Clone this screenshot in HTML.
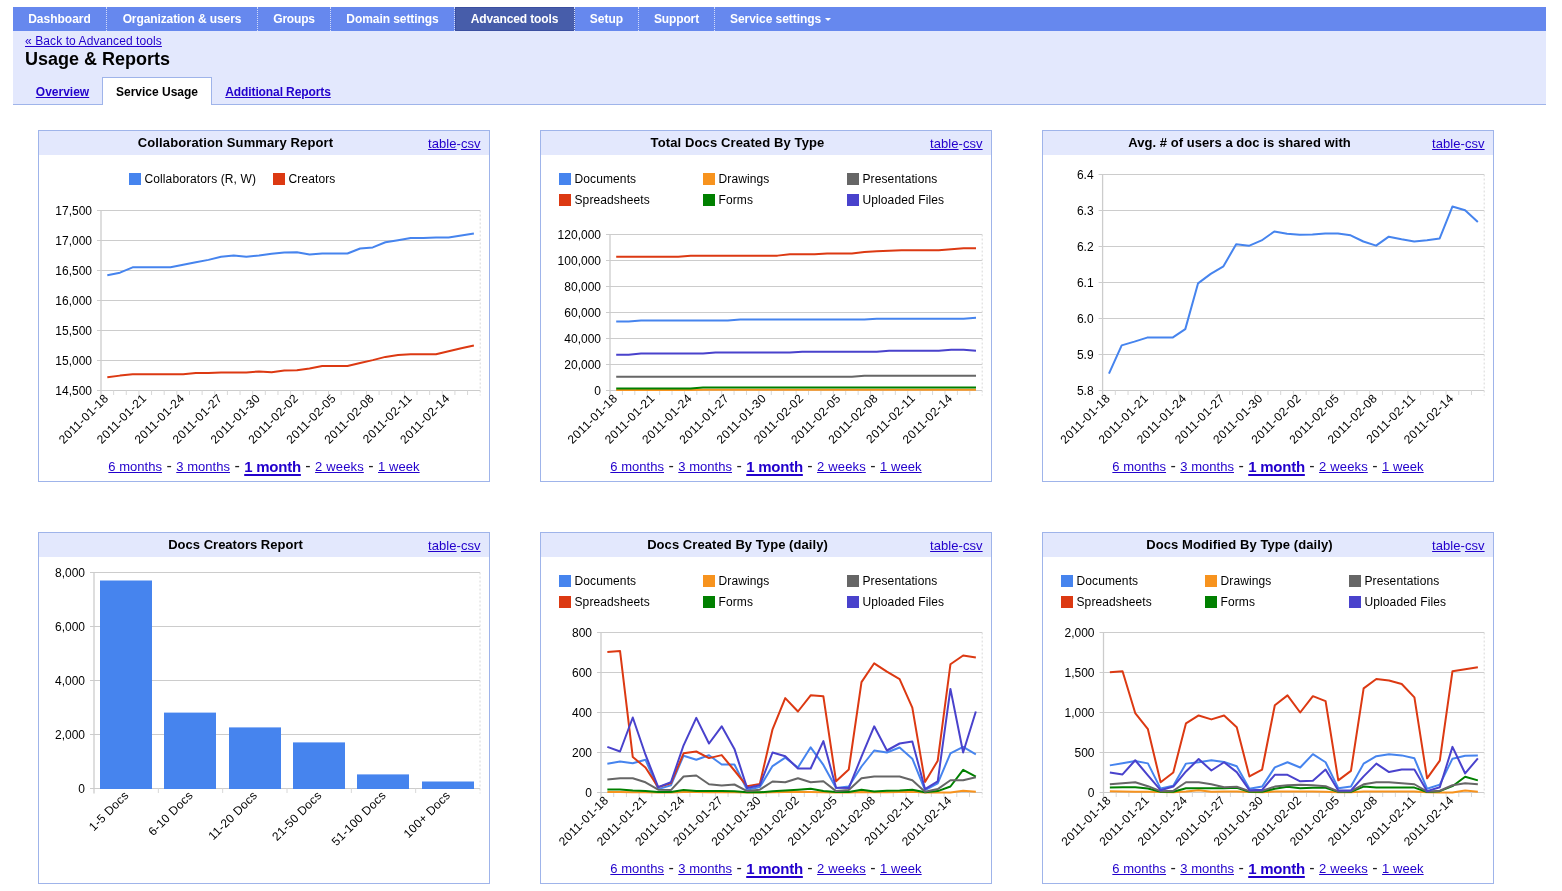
<!DOCTYPE html>
<html><head><meta charset="utf-8"><title>Usage &amp; Reports</title>
<style>
html,body{margin:0;padding:0;background:#fff;}
body{width:1562px;height:891px;overflow:hidden;position:relative;font-family:"Liberation Sans",sans-serif;font-size:13px;color:#000;}
a{color:#2200cc;text-decoration:underline;cursor:pointer;}
#nav{position:absolute;left:13px;top:7px;width:1533px;height:24px;background:#6688ee;white-space:nowrap;font-size:0;}
#nav span{display:inline-block;height:24px;line-height:25px;padding:0;text-align:center;border-right:1px dotted #d3dcf9;color:#fff;font-weight:bold;font-size:12px;vertical-align:top;box-sizing:content-box;}
#nav span.sel{background:#475daa;box-shadow:inset 1px 1px 0 #3b4fa0, inset 0 -1px 0 #3b4fa0;}
#nav span.last{border-right:none;}
#nav i{display:inline-block;width:0;height:0;border-left:3px solid transparent;border-right:3px solid transparent;border-top:3px solid #fff;margin-left:4px;vertical-align:middle;position:relative;top:0px;}
#sub{position:absolute;left:13px;top:31px;width:1533px;height:74px;background:#e3e8fd;border-bottom:1px solid #9fb4ea;box-sizing:border-box;}
#back{position:absolute;left:12px;top:3px;font-size:12px;line-height:14px;letter-spacing:0.09px;white-space:nowrap;}
#h1{position:absolute;left:12px;top:17px;font-size:18px;font-weight:bold;line-height:22px;color:#000;white-space:nowrap;}
#tabs{position:absolute;left:10px;top:46px;height:28px;white-space:nowrap;font-size:0;}
#tabs span{display:inline-block;height:26px;line-height:28px;padding:0;text-align:center;border:1px solid transparent;border-bottom:none;font-size:12px;font-weight:bold;vertical-align:top;}
#tabs span.on{background:#fff;border-color:#9fb4ea;height:27px;color:#000;}
.panel{position:absolute;width:450px;height:350px;border:1px solid #9fb4ea;background:#fff;}
.ph{position:absolute;left:0;top:0;width:450px;height:24px;background:#e3e8fd;}
.pt{position:absolute;left:0;top:0;width:393px;text-align:center;font-weight:bold;font-size:13px;line-height:23px;white-space:nowrap;}
.pl{position:absolute;right:8.4px;letter-spacing:0.05px;top:0;font-size:13px;line-height:25px;white-space:nowrap;color:#2200cc;}
.rng{position:absolute;left:0;width:450px;top:325px;text-align:center;font-size:16px;line-height:20px;white-space:nowrap;color:#222;}
.rng a{font-size:13px;}
.rng a{letter-spacing:0.03px;}
.rng a.cur{font-size:15px;font-weight:bold;letter-spacing:-0.24px;position:relative;top:1px;text-decoration-thickness:2px;text-underline-offset:2px;}
.rng a.w2{letter-spacing:0.15px;}
.rng a.w1{letter-spacing:0.07px;}
svg{position:absolute;left:0;top:0;}
#wrap{position:absolute;left:0;top:0;width:1562px;height:891px;will-change:transform;}
.xl{letter-spacing:0.4px;}
.xb{letter-spacing:0.28px;}
.lg{letter-spacing:0.11px;}
.t{font-family:"Liberation Sans",sans-serif;font-size:12px;fill:#000000;}
</style></head><body><div id="wrap">
<div id="nav"><span style="width:93px;letter-spacing:-0.0px">Dashboard</span><span style="width:150px;letter-spacing:-0.1px">Organization &amp; users</span><span style="width:72px;letter-spacing:-0.2px">Groups</span><span style="width:123px;letter-spacing:-0.07px">Domain settings</span><span class="sel" style="width:119px;letter-spacing:-0.13px">Advanced tools</span><span style="width:63px;letter-spacing:0px">Setup</span><span style="width:75px;letter-spacing:-0.14px">Support</span><span class="last" style="padding-left:15px;letter-spacing:-0.06px">Service settings<i></i></span></div>
<div id="sub"><a id="back">&laquo; Back to Advanced tools</a><div id="h1">Usage &amp; Reports</div>
<div id="tabs"><span style="width:77px"><a>Overview</a></span><span class="on" style="width:108px">Service Usage</span><span style="width:130px;letter-spacing:-0.1px"><a>Additional Reports</a></span></div></div>
<div class="panel" style="left:38px;top:130px"><div class="ph"><div class="pt" style="letter-spacing:0.116px">Collaboration Summary Report</div><div class="pl"><a>table</a>-<a>csv</a></div></div><div class="rng"><a>6 months</a> - <a>3 months</a> - <a class="cur">1 month</a> - <a class="w2">2 weeks</a> - <a class="w1">1 week</a></div></div>
<div class="panel" style="left:540px;top:130px"><div class="ph"><div class="pt" style="letter-spacing:0.122px">Total Docs Created By Type</div><div class="pl"><a>table</a>-<a>csv</a></div></div><div class="rng"><a>6 months</a> - <a>3 months</a> - <a class="cur">1 month</a> - <a class="w2">2 weeks</a> - <a class="w1">1 week</a></div></div>
<div class="panel" style="left:1042px;top:130px"><div class="ph"><div class="pt" style="letter-spacing:0.056px">Avg. # of users a doc is shared with</div><div class="pl"><a>table</a>-<a>csv</a></div></div><div class="rng"><a>6 months</a> - <a>3 months</a> - <a class="cur">1 month</a> - <a class="w2">2 weeks</a> - <a class="w1">1 week</a></div></div>
<div class="panel" style="left:38px;top:532px"><div class="ph"><div class="pt" style="letter-spacing:0.011px">Docs Creators Report</div><div class="pl"><a>table</a>-<a>csv</a></div></div></div>
<div class="panel" style="left:540px;top:532px"><div class="ph"><div class="pt" style="letter-spacing:0.064px">Docs Created By Type (daily)</div><div class="pl"><a>table</a>-<a>csv</a></div></div><div class="rng"><a>6 months</a> - <a>3 months</a> - <a class="cur">1 month</a> - <a class="w2">2 weeks</a> - <a class="w1">1 week</a></div></div>
<div class="panel" style="left:1042px;top:532px"><div class="ph"><div class="pt" style="letter-spacing:0.088px">Docs Modified By Type (daily)</div><div class="pl"><a>table</a>-<a>csv</a></div></div><div class="rng"><a>6 months</a> - <a>3 months</a> - <a class="cur">1 month</a> - <a class="w2">2 weeks</a> - <a class="w1">1 week</a></div></div>
<svg width="1562" height="891" viewBox="0 0 1562 891">
<line x1="97" y1="210.5" x2="480.2" y2="210.5" stroke="#cccccc" stroke-width="1"/>
<text x="92" y="215.2" text-anchor="end" class="t">17,500</text>
<line x1="97" y1="240.5" x2="480.2" y2="240.5" stroke="#cccccc" stroke-width="1"/>
<text x="92" y="245.2" text-anchor="end" class="t">17,000</text>
<line x1="97" y1="270.5" x2="480.2" y2="270.5" stroke="#cccccc" stroke-width="1"/>
<text x="92" y="275.2" text-anchor="end" class="t">16,500</text>
<line x1="97" y1="300.5" x2="480.2" y2="300.5" stroke="#cccccc" stroke-width="1"/>
<text x="92" y="305.2" text-anchor="end" class="t">16,000</text>
<line x1="97" y1="330.5" x2="480.2" y2="330.5" stroke="#cccccc" stroke-width="1"/>
<text x="92" y="335.2" text-anchor="end" class="t">15,500</text>
<line x1="97" y1="360.5" x2="480.2" y2="360.5" stroke="#cccccc" stroke-width="1"/>
<text x="92" y="365.2" text-anchor="end" class="t">15,000</text>
<line x1="97" y1="390.5" x2="480.2" y2="390.5" stroke="#cccccc" stroke-width="1"/>
<text x="92" y="395.2" text-anchor="end" class="t">14,500</text>
<line x1="101" y1="210" x2="101" y2="395.5" stroke="#cccccc" stroke-width="1.3"/>
<line x1="480.2" y1="210.5" x2="480.2" y2="395.5" stroke="#d8d8d8" stroke-width="1" stroke-dasharray="2,2"/>
<line x1="113.64" y1="390.5" x2="113.64" y2="395" stroke="#d8d8d8" stroke-width="1"/>
<line x1="126.28" y1="390.5" x2="126.28" y2="395" stroke="#d8d8d8" stroke-width="1"/>
<line x1="138.92" y1="390.5" x2="138.92" y2="395" stroke="#d8d8d8" stroke-width="1"/>
<line x1="151.56" y1="390.5" x2="151.56" y2="395" stroke="#d8d8d8" stroke-width="1"/>
<line x1="164.2" y1="390.5" x2="164.2" y2="395" stroke="#d8d8d8" stroke-width="1"/>
<line x1="176.84" y1="390.5" x2="176.84" y2="395" stroke="#d8d8d8" stroke-width="1"/>
<line x1="189.48" y1="390.5" x2="189.48" y2="395" stroke="#d8d8d8" stroke-width="1"/>
<line x1="202.12" y1="390.5" x2="202.12" y2="395" stroke="#d8d8d8" stroke-width="1"/>
<line x1="214.76" y1="390.5" x2="214.76" y2="395" stroke="#d8d8d8" stroke-width="1"/>
<line x1="227.4" y1="390.5" x2="227.4" y2="395" stroke="#d8d8d8" stroke-width="1"/>
<line x1="240.04" y1="390.5" x2="240.04" y2="395" stroke="#d8d8d8" stroke-width="1"/>
<line x1="252.68" y1="390.5" x2="252.68" y2="395" stroke="#d8d8d8" stroke-width="1"/>
<line x1="265.32" y1="390.5" x2="265.32" y2="395" stroke="#d8d8d8" stroke-width="1"/>
<line x1="277.96" y1="390.5" x2="277.96" y2="395" stroke="#d8d8d8" stroke-width="1"/>
<line x1="290.6" y1="390.5" x2="290.6" y2="395" stroke="#d8d8d8" stroke-width="1"/>
<line x1="303.24" y1="390.5" x2="303.24" y2="395" stroke="#d8d8d8" stroke-width="1"/>
<line x1="315.88" y1="390.5" x2="315.88" y2="395" stroke="#d8d8d8" stroke-width="1"/>
<line x1="328.52" y1="390.5" x2="328.52" y2="395" stroke="#d8d8d8" stroke-width="1"/>
<line x1="341.16" y1="390.5" x2="341.16" y2="395" stroke="#d8d8d8" stroke-width="1"/>
<line x1="353.8" y1="390.5" x2="353.8" y2="395" stroke="#d8d8d8" stroke-width="1"/>
<line x1="366.44" y1="390.5" x2="366.44" y2="395" stroke="#d8d8d8" stroke-width="1"/>
<line x1="379.08" y1="390.5" x2="379.08" y2="395" stroke="#d8d8d8" stroke-width="1"/>
<line x1="391.72" y1="390.5" x2="391.72" y2="395" stroke="#d8d8d8" stroke-width="1"/>
<line x1="404.36" y1="390.5" x2="404.36" y2="395" stroke="#d8d8d8" stroke-width="1"/>
<line x1="417" y1="390.5" x2="417" y2="395" stroke="#d8d8d8" stroke-width="1"/>
<line x1="429.64" y1="390.5" x2="429.64" y2="395" stroke="#d8d8d8" stroke-width="1"/>
<line x1="442.28" y1="390.5" x2="442.28" y2="395" stroke="#d8d8d8" stroke-width="1"/>
<line x1="454.92" y1="390.5" x2="454.92" y2="395" stroke="#d8d8d8" stroke-width="1"/>
<line x1="467.56" y1="390.5" x2="467.56" y2="395" stroke="#d8d8d8" stroke-width="1"/>
<text transform="translate(109.32,399) rotate(-45)" text-anchor="end" class="t xl">2011-01-18</text>
<text transform="translate(147.24,399) rotate(-45)" text-anchor="end" class="t xl">2011-01-21</text>
<text transform="translate(185.16,399) rotate(-45)" text-anchor="end" class="t xl">2011-01-24</text>
<text transform="translate(223.08,399) rotate(-45)" text-anchor="end" class="t xl">2011-01-27</text>
<text transform="translate(261,399) rotate(-45)" text-anchor="end" class="t xl">2011-01-30</text>
<text transform="translate(298.92,399) rotate(-45)" text-anchor="end" class="t xl">2011-02-02</text>
<text transform="translate(336.84,399) rotate(-45)" text-anchor="end" class="t xl">2011-02-05</text>
<text transform="translate(374.76,399) rotate(-45)" text-anchor="end" class="t xl">2011-02-08</text>
<text transform="translate(412.68,399) rotate(-45)" text-anchor="end" class="t xl">2011-02-11</text>
<text transform="translate(450.6,399) rotate(-45)" text-anchor="end" class="t xl">2011-02-14</text>
<polyline points="107.32,275.24 119.96,272.66 132.6,267.32 145.24,267.32 157.88,267.32 170.52,267.32 183.16,264.74 195.8,262.16 208.44,259.88 221.08,256.76 233.72,255.5 246.36,256.64 259,255.5 271.64,253.82 284.28,252.56 296.92,252.32 309.56,254.48 322.2,253.46 334.84,253.46 347.48,253.46 360.12,248.48 372.76,247.4 385.4,242.3 398.04,240.14 410.68,238.04 423.32,238.04 435.96,237.44 448.6,237.44 461.24,235.52 473.88,233.6" fill="none" stroke="#4684EE" stroke-width="2" stroke-linejoin="round" stroke-linecap="butt"/>
<polyline points="107.32,377.18 119.96,375.62 132.6,374.36 145.24,374.36 157.88,374.36 170.52,374.36 183.16,374.24 195.8,373.04 208.44,373.04 221.08,372.44 233.72,372.44 246.36,372.44 259,371.42 271.64,372.32 284.28,370.52 296.92,370.34 309.56,368.42 322.2,366.02 334.84,366.02 347.48,366.02 360.12,363.08 372.76,360.14 385.4,356.9 398.04,355.1 410.68,354.32 423.32,354.32 435.96,354.32 448.6,351.26 461.24,348.32 473.88,345.5" fill="none" stroke="#DC3912" stroke-width="2" stroke-linejoin="round" stroke-linecap="butt"/>
<rect x="129" y="173" width="12" height="12" fill="#4684EE"/><text x="144.5" y="183.3" class="t lg">Collaborators (R, W)</text>
<rect x="273" y="173" width="12" height="12" fill="#DC3912"/><text x="288.5" y="183.3" class="t lg">Creators</text>
<line x1="606" y1="234.5" x2="982.2" y2="234.5" stroke="#cccccc" stroke-width="1"/>
<text x="601" y="239.2" text-anchor="end" class="t">120,000</text>
<line x1="606" y1="260.5" x2="982.2" y2="260.5" stroke="#cccccc" stroke-width="1"/>
<text x="601" y="265.2" text-anchor="end" class="t">100,000</text>
<line x1="606" y1="286.5" x2="982.2" y2="286.5" stroke="#cccccc" stroke-width="1"/>
<text x="601" y="291.2" text-anchor="end" class="t">80,000</text>
<line x1="606" y1="312.5" x2="982.2" y2="312.5" stroke="#cccccc" stroke-width="1"/>
<text x="601" y="317.2" text-anchor="end" class="t">60,000</text>
<line x1="606" y1="338.5" x2="982.2" y2="338.5" stroke="#cccccc" stroke-width="1"/>
<text x="601" y="343.2" text-anchor="end" class="t">40,000</text>
<line x1="606" y1="364.5" x2="982.2" y2="364.5" stroke="#cccccc" stroke-width="1"/>
<text x="601" y="369.2" text-anchor="end" class="t">20,000</text>
<line x1="606" y1="390.5" x2="982.2" y2="390.5" stroke="#cccccc" stroke-width="1"/>
<text x="601" y="395.2" text-anchor="end" class="t">0</text>
<line x1="610" y1="234" x2="610" y2="395.5" stroke="#cccccc" stroke-width="1.3"/>
<line x1="982.2" y1="234.5" x2="982.2" y2="395.5" stroke="#d8d8d8" stroke-width="1" stroke-dasharray="2,2"/>
<line x1="622.41" y1="390.5" x2="622.41" y2="395" stroke="#d8d8d8" stroke-width="1"/>
<line x1="634.81" y1="390.5" x2="634.81" y2="395" stroke="#d8d8d8" stroke-width="1"/>
<line x1="647.22" y1="390.5" x2="647.22" y2="395" stroke="#d8d8d8" stroke-width="1"/>
<line x1="659.63" y1="390.5" x2="659.63" y2="395" stroke="#d8d8d8" stroke-width="1"/>
<line x1="672.03" y1="390.5" x2="672.03" y2="395" stroke="#d8d8d8" stroke-width="1"/>
<line x1="684.44" y1="390.5" x2="684.44" y2="395" stroke="#d8d8d8" stroke-width="1"/>
<line x1="696.85" y1="390.5" x2="696.85" y2="395" stroke="#d8d8d8" stroke-width="1"/>
<line x1="709.25" y1="390.5" x2="709.25" y2="395" stroke="#d8d8d8" stroke-width="1"/>
<line x1="721.66" y1="390.5" x2="721.66" y2="395" stroke="#d8d8d8" stroke-width="1"/>
<line x1="734.07" y1="390.5" x2="734.07" y2="395" stroke="#d8d8d8" stroke-width="1"/>
<line x1="746.47" y1="390.5" x2="746.47" y2="395" stroke="#d8d8d8" stroke-width="1"/>
<line x1="758.88" y1="390.5" x2="758.88" y2="395" stroke="#d8d8d8" stroke-width="1"/>
<line x1="771.29" y1="390.5" x2="771.29" y2="395" stroke="#d8d8d8" stroke-width="1"/>
<line x1="783.69" y1="390.5" x2="783.69" y2="395" stroke="#d8d8d8" stroke-width="1"/>
<line x1="796.1" y1="390.5" x2="796.1" y2="395" stroke="#d8d8d8" stroke-width="1"/>
<line x1="808.51" y1="390.5" x2="808.51" y2="395" stroke="#d8d8d8" stroke-width="1"/>
<line x1="820.91" y1="390.5" x2="820.91" y2="395" stroke="#d8d8d8" stroke-width="1"/>
<line x1="833.32" y1="390.5" x2="833.32" y2="395" stroke="#d8d8d8" stroke-width="1"/>
<line x1="845.73" y1="390.5" x2="845.73" y2="395" stroke="#d8d8d8" stroke-width="1"/>
<line x1="858.13" y1="390.5" x2="858.13" y2="395" stroke="#d8d8d8" stroke-width="1"/>
<line x1="870.54" y1="390.5" x2="870.54" y2="395" stroke="#d8d8d8" stroke-width="1"/>
<line x1="882.95" y1="390.5" x2="882.95" y2="395" stroke="#d8d8d8" stroke-width="1"/>
<line x1="895.35" y1="390.5" x2="895.35" y2="395" stroke="#d8d8d8" stroke-width="1"/>
<line x1="907.76" y1="390.5" x2="907.76" y2="395" stroke="#d8d8d8" stroke-width="1"/>
<line x1="920.17" y1="390.5" x2="920.17" y2="395" stroke="#d8d8d8" stroke-width="1"/>
<line x1="932.57" y1="390.5" x2="932.57" y2="395" stroke="#d8d8d8" stroke-width="1"/>
<line x1="944.98" y1="390.5" x2="944.98" y2="395" stroke="#d8d8d8" stroke-width="1"/>
<line x1="957.39" y1="390.5" x2="957.39" y2="395" stroke="#d8d8d8" stroke-width="1"/>
<line x1="969.79" y1="390.5" x2="969.79" y2="395" stroke="#d8d8d8" stroke-width="1"/>
<text transform="translate(618.2,399) rotate(-45)" text-anchor="end" class="t xl">2011-01-18</text>
<text transform="translate(655.42,399) rotate(-45)" text-anchor="end" class="t xl">2011-01-21</text>
<text transform="translate(692.64,399) rotate(-45)" text-anchor="end" class="t xl">2011-01-24</text>
<text transform="translate(729.86,399) rotate(-45)" text-anchor="end" class="t xl">2011-01-27</text>
<text transform="translate(767.08,399) rotate(-45)" text-anchor="end" class="t xl">2011-01-30</text>
<text transform="translate(804.3,399) rotate(-45)" text-anchor="end" class="t xl">2011-02-02</text>
<text transform="translate(841.52,399) rotate(-45)" text-anchor="end" class="t xl">2011-02-05</text>
<text transform="translate(878.74,399) rotate(-45)" text-anchor="end" class="t xl">2011-02-08</text>
<text transform="translate(915.96,399) rotate(-45)" text-anchor="end" class="t xl">2011-02-11</text>
<text transform="translate(953.18,399) rotate(-45)" text-anchor="end" class="t xl">2011-02-14</text>
<polyline points="616.2,321.61 628.61,321.61 641.02,320.59 653.42,320.59 665.83,320.59 678.24,320.59 690.64,320.59 703.05,320.59 715.46,320.59 727.86,320.59 740.27,319.56 752.68,319.56 765.08,319.56 777.49,319.56 789.9,319.56 802.3,319.56 814.71,319.56 827.12,319.56 839.52,319.56 851.93,319.56 864.34,319.56 876.74,318.66 889.15,318.66 901.56,318.66 913.96,318.66 926.37,318.66 938.78,318.66 951.18,318.66 963.59,318.66 976,317.63" fill="none" stroke="#4684EE" stroke-width="2" stroke-linejoin="round" stroke-linecap="butt"/>
<polyline points="616.2,256.66 628.61,256.66 641.02,256.66 653.42,256.66 665.83,256.66 678.24,256.66 690.64,255.63 703.05,255.63 715.46,255.63 727.86,255.63 740.27,255.63 752.68,255.63 765.08,255.63 777.49,255.63 789.9,254.35 802.3,254.35 814.71,254.35 827.12,253.46 839.52,253.46 851.93,253.46 864.34,252.05 876.74,251.15 889.15,250.77 901.56,250.13 913.96,250.13 926.37,250.13 938.78,250.13 951.18,249.23 963.59,248.33 976,248.33" fill="none" stroke="#DC3912" stroke-width="2" stroke-linejoin="round" stroke-linecap="butt"/>
<polyline points="616.2,390.11 628.61,390.11 641.02,390.11 653.42,390.11 665.83,390.11 678.24,390.11 690.64,390.11 703.05,389.72 715.46,389.72 727.86,389.72 740.27,389.72 752.68,389.72 765.08,389.72 777.49,389.72 789.9,389.72 802.3,389.72 814.71,389.72 827.12,389.72 839.52,389.72 851.93,389.72 864.34,389.72 876.74,389.72 889.15,389.72 901.56,389.72 913.96,389.72 926.37,389.72 938.78,389.72 951.18,389.72 963.59,389.72 976,389.72" fill="none" stroke="#F7931E" stroke-width="2" stroke-linejoin="round" stroke-linecap="butt"/>
<polyline points="616.2,388.45 628.61,388.45 641.02,388.45 653.42,388.45 665.83,388.45 678.24,388.45 690.64,388.45 703.05,387.55 715.46,387.55 727.86,387.55 740.27,387.55 752.68,387.55 765.08,387.55 777.49,387.55 789.9,387.55 802.3,387.55 814.71,387.55 827.12,387.55 839.52,387.55 851.93,387.55 864.34,387.55 876.74,387.55 889.15,387.55 901.56,387.55 913.96,387.55 926.37,387.55 938.78,387.55 951.18,387.55 963.59,387.55 976,387.55" fill="none" stroke="#008000" stroke-width="2" stroke-linejoin="round" stroke-linecap="butt"/>
<polyline points="616.2,376.8 628.61,376.8 641.02,376.8 653.42,376.8 665.83,376.8 678.24,376.8 690.64,376.8 703.05,376.8 715.46,376.8 727.86,376.8 740.27,376.8 752.68,376.8 765.08,376.8 777.49,376.8 789.9,376.8 802.3,376.8 814.71,376.8 827.12,376.8 839.52,376.8 851.93,376.8 864.34,375.64 876.74,375.64 889.15,375.64 901.56,375.64 913.96,375.64 926.37,375.64 938.78,375.64 951.18,375.64 963.59,375.64 976,375.64" fill="none" stroke="#666666" stroke-width="2" stroke-linejoin="round" stroke-linecap="butt"/>
<polyline points="616.2,354.78 628.61,354.78 641.02,353.62 653.42,353.62 665.83,353.62 678.24,353.62 690.64,353.62 703.05,353.62 715.46,352.6 727.86,352.6 740.27,352.6 752.68,352.6 765.08,352.6 777.49,352.6 789.9,352.6 802.3,351.69 814.71,351.69 827.12,351.69 839.52,351.69 851.93,351.69 864.34,351.69 876.74,351.69 889.15,350.67 901.56,350.67 913.96,350.67 926.37,350.67 938.78,350.67 951.18,349.68 963.59,349.68 976,350.67" fill="none" stroke="#4942CC" stroke-width="2" stroke-linejoin="round" stroke-linecap="butt"/>
<rect x="559" y="173" width="12" height="12" fill="#4684EE"/>
<text x="574.5" y="183.3" class="t lg">Documents</text>
<rect x="559" y="194" width="12" height="12" fill="#DC3912"/>
<text x="574.5" y="204.3" class="t lg">Spreadsheets</text>
<rect x="703" y="173" width="12" height="12" fill="#F7931E"/>
<text x="718.5" y="183.3" class="t lg">Drawings</text>
<rect x="703" y="194" width="12" height="12" fill="#008000"/>
<text x="718.5" y="204.3" class="t lg">Forms</text>
<rect x="847" y="173" width="12" height="12" fill="#666666"/>
<text x="862.5" y="183.3" class="t lg">Presentations</text>
<rect x="847" y="194" width="12" height="12" fill="#4942CC"/>
<text x="862.5" y="204.3" class="t lg">Uploaded Files</text>
<line x1="1098.6" y1="174.5" x2="1484.2" y2="174.5" stroke="#cccccc" stroke-width="1"/>
<text x="1093.6" y="179.2" text-anchor="end" class="t">6.4</text>
<line x1="1098.6" y1="210.5" x2="1484.2" y2="210.5" stroke="#cccccc" stroke-width="1"/>
<text x="1093.6" y="215.2" text-anchor="end" class="t">6.3</text>
<line x1="1098.6" y1="246.5" x2="1484.2" y2="246.5" stroke="#cccccc" stroke-width="1"/>
<text x="1093.6" y="251.2" text-anchor="end" class="t">6.2</text>
<line x1="1098.6" y1="282.5" x2="1484.2" y2="282.5" stroke="#cccccc" stroke-width="1"/>
<text x="1093.6" y="287.2" text-anchor="end" class="t">6.1</text>
<line x1="1098.6" y1="318.5" x2="1484.2" y2="318.5" stroke="#cccccc" stroke-width="1"/>
<text x="1093.6" y="323.2" text-anchor="end" class="t">6.0</text>
<line x1="1098.6" y1="354.5" x2="1484.2" y2="354.5" stroke="#cccccc" stroke-width="1"/>
<text x="1093.6" y="359.2" text-anchor="end" class="t">5.9</text>
<line x1="1098.6" y1="390.5" x2="1484.2" y2="390.5" stroke="#cccccc" stroke-width="1"/>
<text x="1093.6" y="395.2" text-anchor="end" class="t">5.8</text>
<line x1="1102.6" y1="174" x2="1102.6" y2="395.5" stroke="#cccccc" stroke-width="1.3"/>
<line x1="1484.2" y1="174.5" x2="1484.2" y2="395.5" stroke="#d8d8d8" stroke-width="1" stroke-dasharray="2,2"/>
<line x1="1115.32" y1="390.5" x2="1115.32" y2="395" stroke="#d8d8d8" stroke-width="1"/>
<line x1="1128.04" y1="390.5" x2="1128.04" y2="395" stroke="#d8d8d8" stroke-width="1"/>
<line x1="1140.76" y1="390.5" x2="1140.76" y2="395" stroke="#d8d8d8" stroke-width="1"/>
<line x1="1153.48" y1="390.5" x2="1153.48" y2="395" stroke="#d8d8d8" stroke-width="1"/>
<line x1="1166.2" y1="390.5" x2="1166.2" y2="395" stroke="#d8d8d8" stroke-width="1"/>
<line x1="1178.92" y1="390.5" x2="1178.92" y2="395" stroke="#d8d8d8" stroke-width="1"/>
<line x1="1191.64" y1="390.5" x2="1191.64" y2="395" stroke="#d8d8d8" stroke-width="1"/>
<line x1="1204.36" y1="390.5" x2="1204.36" y2="395" stroke="#d8d8d8" stroke-width="1"/>
<line x1="1217.08" y1="390.5" x2="1217.08" y2="395" stroke="#d8d8d8" stroke-width="1"/>
<line x1="1229.8" y1="390.5" x2="1229.8" y2="395" stroke="#d8d8d8" stroke-width="1"/>
<line x1="1242.52" y1="390.5" x2="1242.52" y2="395" stroke="#d8d8d8" stroke-width="1"/>
<line x1="1255.24" y1="390.5" x2="1255.24" y2="395" stroke="#d8d8d8" stroke-width="1"/>
<line x1="1267.96" y1="390.5" x2="1267.96" y2="395" stroke="#d8d8d8" stroke-width="1"/>
<line x1="1280.68" y1="390.5" x2="1280.68" y2="395" stroke="#d8d8d8" stroke-width="1"/>
<line x1="1293.4" y1="390.5" x2="1293.4" y2="395" stroke="#d8d8d8" stroke-width="1"/>
<line x1="1306.12" y1="390.5" x2="1306.12" y2="395" stroke="#d8d8d8" stroke-width="1"/>
<line x1="1318.84" y1="390.5" x2="1318.84" y2="395" stroke="#d8d8d8" stroke-width="1"/>
<line x1="1331.56" y1="390.5" x2="1331.56" y2="395" stroke="#d8d8d8" stroke-width="1"/>
<line x1="1344.28" y1="390.5" x2="1344.28" y2="395" stroke="#d8d8d8" stroke-width="1"/>
<line x1="1357" y1="390.5" x2="1357" y2="395" stroke="#d8d8d8" stroke-width="1"/>
<line x1="1369.72" y1="390.5" x2="1369.72" y2="395" stroke="#d8d8d8" stroke-width="1"/>
<line x1="1382.44" y1="390.5" x2="1382.44" y2="395" stroke="#d8d8d8" stroke-width="1"/>
<line x1="1395.16" y1="390.5" x2="1395.16" y2="395" stroke="#d8d8d8" stroke-width="1"/>
<line x1="1407.88" y1="390.5" x2="1407.88" y2="395" stroke="#d8d8d8" stroke-width="1"/>
<line x1="1420.6" y1="390.5" x2="1420.6" y2="395" stroke="#d8d8d8" stroke-width="1"/>
<line x1="1433.32" y1="390.5" x2="1433.32" y2="395" stroke="#d8d8d8" stroke-width="1"/>
<line x1="1446.04" y1="390.5" x2="1446.04" y2="395" stroke="#d8d8d8" stroke-width="1"/>
<line x1="1458.76" y1="390.5" x2="1458.76" y2="395" stroke="#d8d8d8" stroke-width="1"/>
<line x1="1471.48" y1="390.5" x2="1471.48" y2="395" stroke="#d8d8d8" stroke-width="1"/>
<text transform="translate(1110.96,399) rotate(-45)" text-anchor="end" class="t xl">2011-01-18</text>
<text transform="translate(1149.12,399) rotate(-45)" text-anchor="end" class="t xl">2011-01-21</text>
<text transform="translate(1187.28,399) rotate(-45)" text-anchor="end" class="t xl">2011-01-24</text>
<text transform="translate(1225.44,399) rotate(-45)" text-anchor="end" class="t xl">2011-01-27</text>
<text transform="translate(1263.6,399) rotate(-45)" text-anchor="end" class="t xl">2011-01-30</text>
<text transform="translate(1301.76,399) rotate(-45)" text-anchor="end" class="t xl">2011-02-02</text>
<text transform="translate(1339.92,399) rotate(-45)" text-anchor="end" class="t xl">2011-02-05</text>
<text transform="translate(1378.08,399) rotate(-45)" text-anchor="end" class="t xl">2011-02-08</text>
<text transform="translate(1416.24,399) rotate(-45)" text-anchor="end" class="t xl">2011-02-11</text>
<text transform="translate(1454.4,399) rotate(-45)" text-anchor="end" class="t xl">2011-02-14</text>
<polyline points="1108.96,373.69 1121.68,345.39 1134.4,341.65 1147.12,337.58 1159.84,337.58 1172.56,337.58 1185.28,329.12 1198,283.4 1210.72,273.86 1223.44,266.3 1236.16,244.34 1248.88,245.82 1261.6,240.45 1274.32,231.52 1287.04,233.72 1299.76,234.73 1312.48,234.58 1325.2,233.43 1337.92,233.43 1350.64,235.34 1363.36,241.5 1376.08,245.64 1388.8,236.67 1401.52,239.3 1414.24,241.5 1426.96,240.16 1439.68,238.44 1452.4,206.54 1465.12,210.21 1477.84,222.09" fill="none" stroke="#4684EE" stroke-width="2" stroke-linejoin="round" stroke-linecap="butt"/>
<line x1="90" y1="572.5" x2="480" y2="572.5" stroke="#cccccc" stroke-width="1"/>
<text x="85" y="577.2" text-anchor="end" class="t">8,000</text>
<line x1="90" y1="626.5" x2="480" y2="626.5" stroke="#cccccc" stroke-width="1"/>
<text x="85" y="631.2" text-anchor="end" class="t">6,000</text>
<line x1="90" y1="680.5" x2="480" y2="680.5" stroke="#cccccc" stroke-width="1"/>
<text x="85" y="685.2" text-anchor="end" class="t">4,000</text>
<line x1="90" y1="734.5" x2="480" y2="734.5" stroke="#cccccc" stroke-width="1"/>
<text x="85" y="739.2" text-anchor="end" class="t">2,000</text>
<line x1="90" y1="788.5" x2="480" y2="788.5" stroke="#cccccc" stroke-width="1"/>
<text x="85" y="793.2" text-anchor="end" class="t">0</text>
<line x1="94" y1="572" x2="94" y2="793.5" stroke="#cccccc" stroke-width="1.3"/>
<line x1="480" y1="572.5" x2="480" y2="793.5" stroke="#d8d8d8" stroke-width="1" stroke-dasharray="2,2"/>
<line x1="158.33" y1="788.5" x2="158.33" y2="793" stroke="#d8d8d8" stroke-width="1"/>
<line x1="222.67" y1="788.5" x2="222.67" y2="793" stroke="#d8d8d8" stroke-width="1"/>
<line x1="287" y1="788.5" x2="287" y2="793" stroke="#d8d8d8" stroke-width="1"/>
<line x1="351.33" y1="788.5" x2="351.33" y2="793" stroke="#d8d8d8" stroke-width="1"/>
<line x1="415.67" y1="788.5" x2="415.67" y2="793" stroke="#d8d8d8" stroke-width="1"/>
<rect x="100" y="580.5" width="52" height="208.5" fill="#4684EE"/>
<rect x="164" y="712.6" width="52" height="76.4" fill="#4684EE"/>
<rect x="229" y="727.4" width="52" height="61.6" fill="#4684EE"/>
<rect x="293" y="742.4" width="52" height="46.6" fill="#4684EE"/>
<rect x="357" y="774.4" width="52" height="14.6" fill="#4684EE"/>
<rect x="422" y="781.5" width="52" height="7.5" fill="#4684EE"/>
<text transform="translate(129.37,796.1) rotate(-45)" text-anchor="end" class="t xb">1-5 Docs</text>
<text transform="translate(193.7,796.1) rotate(-45)" text-anchor="end" class="t xb">6-10 Docs</text>
<text transform="translate(258.03,796.1) rotate(-45)" text-anchor="end" class="t xb">11-20 Docs</text>
<text transform="translate(322.37,796.1) rotate(-45)" text-anchor="end" class="t xb">21-50 Docs</text>
<text transform="translate(386.7,796.1) rotate(-45)" text-anchor="end" class="t xb">51-100 Docs</text>
<text transform="translate(451.03,796.1) rotate(-45)" text-anchor="end" class="t xb">100+ Docs</text>
<line x1="597" y1="632.5" x2="982.2" y2="632.5" stroke="#cccccc" stroke-width="1"/>
<text x="592" y="637.2" text-anchor="end" class="t">800</text>
<line x1="597" y1="672.5" x2="982.2" y2="672.5" stroke="#cccccc" stroke-width="1"/>
<text x="592" y="677.2" text-anchor="end" class="t">600</text>
<line x1="597" y1="712.5" x2="982.2" y2="712.5" stroke="#cccccc" stroke-width="1"/>
<text x="592" y="717.2" text-anchor="end" class="t">400</text>
<line x1="597" y1="752.5" x2="982.2" y2="752.5" stroke="#cccccc" stroke-width="1"/>
<text x="592" y="757.2" text-anchor="end" class="t">200</text>
<line x1="597" y1="792.5" x2="982.2" y2="792.5" stroke="#cccccc" stroke-width="1"/>
<text x="592" y="797.2" text-anchor="end" class="t">0</text>
<line x1="601" y1="632" x2="601" y2="797.5" stroke="#cccccc" stroke-width="1.3"/>
<line x1="982.2" y1="632.5" x2="982.2" y2="797.5" stroke="#d8d8d8" stroke-width="1" stroke-dasharray="2,2"/>
<line x1="613.71" y1="792.5" x2="613.71" y2="797" stroke="#d8d8d8" stroke-width="1"/>
<line x1="626.41" y1="792.5" x2="626.41" y2="797" stroke="#d8d8d8" stroke-width="1"/>
<line x1="639.12" y1="792.5" x2="639.12" y2="797" stroke="#d8d8d8" stroke-width="1"/>
<line x1="651.83" y1="792.5" x2="651.83" y2="797" stroke="#d8d8d8" stroke-width="1"/>
<line x1="664.53" y1="792.5" x2="664.53" y2="797" stroke="#d8d8d8" stroke-width="1"/>
<line x1="677.24" y1="792.5" x2="677.24" y2="797" stroke="#d8d8d8" stroke-width="1"/>
<line x1="689.95" y1="792.5" x2="689.95" y2="797" stroke="#d8d8d8" stroke-width="1"/>
<line x1="702.65" y1="792.5" x2="702.65" y2="797" stroke="#d8d8d8" stroke-width="1"/>
<line x1="715.36" y1="792.5" x2="715.36" y2="797" stroke="#d8d8d8" stroke-width="1"/>
<line x1="728.07" y1="792.5" x2="728.07" y2="797" stroke="#d8d8d8" stroke-width="1"/>
<line x1="740.77" y1="792.5" x2="740.77" y2="797" stroke="#d8d8d8" stroke-width="1"/>
<line x1="753.48" y1="792.5" x2="753.48" y2="797" stroke="#d8d8d8" stroke-width="1"/>
<line x1="766.19" y1="792.5" x2="766.19" y2="797" stroke="#d8d8d8" stroke-width="1"/>
<line x1="778.89" y1="792.5" x2="778.89" y2="797" stroke="#d8d8d8" stroke-width="1"/>
<line x1="791.6" y1="792.5" x2="791.6" y2="797" stroke="#d8d8d8" stroke-width="1"/>
<line x1="804.31" y1="792.5" x2="804.31" y2="797" stroke="#d8d8d8" stroke-width="1"/>
<line x1="817.01" y1="792.5" x2="817.01" y2="797" stroke="#d8d8d8" stroke-width="1"/>
<line x1="829.72" y1="792.5" x2="829.72" y2="797" stroke="#d8d8d8" stroke-width="1"/>
<line x1="842.43" y1="792.5" x2="842.43" y2="797" stroke="#d8d8d8" stroke-width="1"/>
<line x1="855.13" y1="792.5" x2="855.13" y2="797" stroke="#d8d8d8" stroke-width="1"/>
<line x1="867.84" y1="792.5" x2="867.84" y2="797" stroke="#d8d8d8" stroke-width="1"/>
<line x1="880.55" y1="792.5" x2="880.55" y2="797" stroke="#d8d8d8" stroke-width="1"/>
<line x1="893.25" y1="792.5" x2="893.25" y2="797" stroke="#d8d8d8" stroke-width="1"/>
<line x1="905.96" y1="792.5" x2="905.96" y2="797" stroke="#d8d8d8" stroke-width="1"/>
<line x1="918.67" y1="792.5" x2="918.67" y2="797" stroke="#d8d8d8" stroke-width="1"/>
<line x1="931.37" y1="792.5" x2="931.37" y2="797" stroke="#d8d8d8" stroke-width="1"/>
<line x1="944.08" y1="792.5" x2="944.08" y2="797" stroke="#d8d8d8" stroke-width="1"/>
<line x1="956.79" y1="792.5" x2="956.79" y2="797" stroke="#d8d8d8" stroke-width="1"/>
<line x1="969.49" y1="792.5" x2="969.49" y2="797" stroke="#d8d8d8" stroke-width="1"/>
<text transform="translate(609.35,801) rotate(-45)" text-anchor="end" class="t xl">2011-01-18</text>
<text transform="translate(647.47,801) rotate(-45)" text-anchor="end" class="t xl">2011-01-21</text>
<text transform="translate(685.59,801) rotate(-45)" text-anchor="end" class="t xl">2011-01-24</text>
<text transform="translate(723.71,801) rotate(-45)" text-anchor="end" class="t xl">2011-01-27</text>
<text transform="translate(761.83,801) rotate(-45)" text-anchor="end" class="t xl">2011-01-30</text>
<text transform="translate(799.95,801) rotate(-45)" text-anchor="end" class="t xl">2011-02-02</text>
<text transform="translate(838.07,801) rotate(-45)" text-anchor="end" class="t xl">2011-02-05</text>
<text transform="translate(876.19,801) rotate(-45)" text-anchor="end" class="t xl">2011-02-08</text>
<text transform="translate(914.31,801) rotate(-45)" text-anchor="end" class="t xl">2011-02-11</text>
<text transform="translate(952.43,801) rotate(-45)" text-anchor="end" class="t xl">2011-02-14</text>
<polyline points="607.35,763.7 620.06,761.5 632.77,763.3 645.47,759.7 658.18,789.1 670.89,785.3 683.59,755.7 696.3,759.7 709.01,755.3 721.71,764.5 734.42,764.5 747.13,789.7 759.83,787.1 772.54,766.1 785.25,757.7 797.95,767.5 810.66,747.3 823.37,764.9 836.07,788.1 848.78,786.5 861.49,766.5 874.19,750.5 886.9,752.5 899.61,747.5 912.31,758.7 925.02,790.1 937.73,783.3 950.43,753.3 963.14,746.9 975.85,754.3" fill="none" stroke="#4684EE" stroke-width="2" stroke-linejoin="round" stroke-linecap="butt"/>
<polyline points="607.35,652.1 620.06,651.1 632.77,757.1 645.47,767.5 658.18,787.1 670.89,783.3 683.59,753.3 696.3,751.5 709.01,758.1 721.71,755.1 734.42,770.5 747.13,786.3 759.83,783.9 772.54,729.3 785.25,698.1 797.95,711.5 810.66,695.3 823.37,696.3 836.07,781.3 848.78,769.5 861.49,682.1 874.19,663.3 886.9,671.7 899.61,679.1 912.31,707.7 925.02,781.9 937.73,760.7 950.43,664.3 963.14,655.5 975.85,657.5" fill="none" stroke="#DC3912" stroke-width="2" stroke-linejoin="round" stroke-linecap="butt"/>
<polyline points="607.35,791.9 620.06,792.1 632.77,792.3 645.47,792.3 658.18,792.5 670.89,792.5 683.59,791.9 696.3,792.1 709.01,792.3 721.71,792.3 734.42,792.3 747.13,792.5 759.83,792.5 772.54,792.3 785.25,791.9 797.95,791.7 810.66,792.1 823.37,792.3 836.07,792.5 848.78,792.5 861.49,791.9 874.19,792.3 886.9,792.3 899.61,792.1 912.31,791.7 925.02,792.5 937.73,792.5 950.43,792.5 963.14,790.7 975.85,791.7" fill="none" stroke="#F7931E" stroke-width="2" stroke-linejoin="round" stroke-linecap="butt"/>
<polyline points="607.35,789.5 620.06,789.5 632.77,790.5 645.47,791.1 658.18,792.1 670.89,792.1 683.59,790.1 696.3,790.9 709.01,790.9 721.71,790.9 734.42,791.3 747.13,792.3 759.83,792.3 772.54,791.3 785.25,790.5 797.95,789.7 810.66,788.7 823.37,791.1 836.07,792.1 848.78,792.1 861.49,789.7 874.19,791.5 886.9,790.7 899.61,790.5 912.31,789.7 925.02,792.3 937.73,791.1 950.43,786.5 963.14,769.9 975.85,776.7" fill="none" stroke="#008000" stroke-width="2" stroke-linejoin="round" stroke-linecap="butt"/>
<polyline points="607.35,779.5 620.06,778.3 632.77,778.3 645.47,782.3 658.18,789.7 670.89,790.1 683.59,776.5 696.3,775.5 709.01,784.3 721.71,785.5 734.42,784.5 747.13,791.1 759.83,789.7 772.54,781.5 785.25,782.3 797.95,778.3 810.66,782.3 823.37,781.3 836.07,791.1 848.78,790.1 861.49,778.3 874.19,776.5 886.9,776.5 899.61,776.5 912.31,780.3 925.02,791.7 937.73,789.1 950.43,780.3 963.14,780.3 975.85,777.3" fill="none" stroke="#666666" stroke-width="2" stroke-linejoin="round" stroke-linecap="butt"/>
<polyline points="607.35,746.9 620.06,751.5 632.77,717.5 645.47,754.7 658.18,787.1 670.89,782.3 683.59,745.3 696.3,717.9 709.01,743.5 721.71,726.3 734.42,748.9 747.13,788.1 759.83,785.3 772.54,752.5 785.25,756.3 797.95,768.5 810.66,768.5 823.37,741.1 836.07,787.7 848.78,788.1 861.49,756.7 874.19,726.3 886.9,750.5 899.61,743.5 912.31,741.5 925.02,789.1 937.73,781.3 950.43,688.9 963.14,752.5 975.85,711.5" fill="none" stroke="#4942CC" stroke-width="2" stroke-linejoin="round" stroke-linecap="butt"/>
<rect x="559" y="575" width="12" height="12" fill="#4684EE"/>
<text x="574.5" y="585.3" class="t lg">Documents</text>
<rect x="559" y="596" width="12" height="12" fill="#DC3912"/>
<text x="574.5" y="606.3" class="t lg">Spreadsheets</text>
<rect x="703" y="575" width="12" height="12" fill="#F7931E"/>
<text x="718.5" y="585.3" class="t lg">Drawings</text>
<rect x="703" y="596" width="12" height="12" fill="#008000"/>
<text x="718.5" y="606.3" class="t lg">Forms</text>
<rect x="847" y="575" width="12" height="12" fill="#666666"/>
<text x="862.5" y="585.3" class="t lg">Presentations</text>
<rect x="847" y="596" width="12" height="12" fill="#4942CC"/>
<text x="862.5" y="606.3" class="t lg">Uploaded Files</text>
<line x1="1099.5" y1="632.5" x2="1484.2" y2="632.5" stroke="#cccccc" stroke-width="1"/>
<text x="1094.5" y="637.2" text-anchor="end" class="t">2,000</text>
<line x1="1099.5" y1="672.5" x2="1484.2" y2="672.5" stroke="#cccccc" stroke-width="1"/>
<text x="1094.5" y="677.2" text-anchor="end" class="t">1,500</text>
<line x1="1099.5" y1="712.5" x2="1484.2" y2="712.5" stroke="#cccccc" stroke-width="1"/>
<text x="1094.5" y="717.2" text-anchor="end" class="t">1,000</text>
<line x1="1099.5" y1="752.5" x2="1484.2" y2="752.5" stroke="#cccccc" stroke-width="1"/>
<text x="1094.5" y="757.2" text-anchor="end" class="t">500</text>
<line x1="1099.5" y1="792.5" x2="1484.2" y2="792.5" stroke="#cccccc" stroke-width="1"/>
<text x="1094.5" y="797.2" text-anchor="end" class="t">0</text>
<line x1="1103.5" y1="632" x2="1103.5" y2="797.5" stroke="#cccccc" stroke-width="1.3"/>
<line x1="1484.2" y1="632.5" x2="1484.2" y2="797.5" stroke="#d8d8d8" stroke-width="1" stroke-dasharray="2,2"/>
<line x1="1116.19" y1="792.5" x2="1116.19" y2="797" stroke="#d8d8d8" stroke-width="1"/>
<line x1="1128.88" y1="792.5" x2="1128.88" y2="797" stroke="#d8d8d8" stroke-width="1"/>
<line x1="1141.57" y1="792.5" x2="1141.57" y2="797" stroke="#d8d8d8" stroke-width="1"/>
<line x1="1154.26" y1="792.5" x2="1154.26" y2="797" stroke="#d8d8d8" stroke-width="1"/>
<line x1="1166.95" y1="792.5" x2="1166.95" y2="797" stroke="#d8d8d8" stroke-width="1"/>
<line x1="1179.64" y1="792.5" x2="1179.64" y2="797" stroke="#d8d8d8" stroke-width="1"/>
<line x1="1192.33" y1="792.5" x2="1192.33" y2="797" stroke="#d8d8d8" stroke-width="1"/>
<line x1="1205.02" y1="792.5" x2="1205.02" y2="797" stroke="#d8d8d8" stroke-width="1"/>
<line x1="1217.71" y1="792.5" x2="1217.71" y2="797" stroke="#d8d8d8" stroke-width="1"/>
<line x1="1230.4" y1="792.5" x2="1230.4" y2="797" stroke="#d8d8d8" stroke-width="1"/>
<line x1="1243.09" y1="792.5" x2="1243.09" y2="797" stroke="#d8d8d8" stroke-width="1"/>
<line x1="1255.78" y1="792.5" x2="1255.78" y2="797" stroke="#d8d8d8" stroke-width="1"/>
<line x1="1268.47" y1="792.5" x2="1268.47" y2="797" stroke="#d8d8d8" stroke-width="1"/>
<line x1="1281.16" y1="792.5" x2="1281.16" y2="797" stroke="#d8d8d8" stroke-width="1"/>
<line x1="1293.85" y1="792.5" x2="1293.85" y2="797" stroke="#d8d8d8" stroke-width="1"/>
<line x1="1306.54" y1="792.5" x2="1306.54" y2="797" stroke="#d8d8d8" stroke-width="1"/>
<line x1="1319.23" y1="792.5" x2="1319.23" y2="797" stroke="#d8d8d8" stroke-width="1"/>
<line x1="1331.92" y1="792.5" x2="1331.92" y2="797" stroke="#d8d8d8" stroke-width="1"/>
<line x1="1344.61" y1="792.5" x2="1344.61" y2="797" stroke="#d8d8d8" stroke-width="1"/>
<line x1="1357.3" y1="792.5" x2="1357.3" y2="797" stroke="#d8d8d8" stroke-width="1"/>
<line x1="1369.99" y1="792.5" x2="1369.99" y2="797" stroke="#d8d8d8" stroke-width="1"/>
<line x1="1382.68" y1="792.5" x2="1382.68" y2="797" stroke="#d8d8d8" stroke-width="1"/>
<line x1="1395.37" y1="792.5" x2="1395.37" y2="797" stroke="#d8d8d8" stroke-width="1"/>
<line x1="1408.06" y1="792.5" x2="1408.06" y2="797" stroke="#d8d8d8" stroke-width="1"/>
<line x1="1420.75" y1="792.5" x2="1420.75" y2="797" stroke="#d8d8d8" stroke-width="1"/>
<line x1="1433.44" y1="792.5" x2="1433.44" y2="797" stroke="#d8d8d8" stroke-width="1"/>
<line x1="1446.13" y1="792.5" x2="1446.13" y2="797" stroke="#d8d8d8" stroke-width="1"/>
<line x1="1458.82" y1="792.5" x2="1458.82" y2="797" stroke="#d8d8d8" stroke-width="1"/>
<line x1="1471.51" y1="792.5" x2="1471.51" y2="797" stroke="#d8d8d8" stroke-width="1"/>
<text transform="translate(1111.85,801) rotate(-45)" text-anchor="end" class="t xl">2011-01-18</text>
<text transform="translate(1149.91,801) rotate(-45)" text-anchor="end" class="t xl">2011-01-21</text>
<text transform="translate(1187.99,801) rotate(-45)" text-anchor="end" class="t xl">2011-01-24</text>
<text transform="translate(1226.06,801) rotate(-45)" text-anchor="end" class="t xl">2011-01-27</text>
<text transform="translate(1264.12,801) rotate(-45)" text-anchor="end" class="t xl">2011-01-30</text>
<text transform="translate(1302.19,801) rotate(-45)" text-anchor="end" class="t xl">2011-02-02</text>
<text transform="translate(1340.27,801) rotate(-45)" text-anchor="end" class="t xl">2011-02-05</text>
<text transform="translate(1378.34,801) rotate(-45)" text-anchor="end" class="t xl">2011-02-08</text>
<text transform="translate(1416.4,801) rotate(-45)" text-anchor="end" class="t xl">2011-02-11</text>
<text transform="translate(1454.47,801) rotate(-45)" text-anchor="end" class="t xl">2011-02-14</text>
<polyline points="1109.85,765.38 1122.54,763.22 1135.22,761.06 1147.91,763.38 1160.61,788.58 1173.3,785.78 1185.99,763.62 1198.67,762.26 1211.37,760.26 1224.06,762.02 1236.74,766.18 1249.43,788.74 1262.12,786.58 1274.82,767.38 1287.51,762.26 1300.19,767.54 1312.88,754.18 1325.58,762.26 1338.27,788.18 1350.95,786.58 1363.64,763.62 1376.34,756.18 1389.03,754.34 1401.72,755.38 1414.4,758.34 1427.1,788.74 1439.79,784.66 1452.47,758.66 1465.16,755.78 1477.86,755.38" fill="none" stroke="#4684EE" stroke-width="2" stroke-linejoin="round" stroke-linecap="butt"/>
<polyline points="1109.85,672.18 1122.54,671.22 1135.22,713.06 1147.91,729.22 1160.61,782.26 1173.3,772.5 1185.99,723.3 1198.67,715.46 1211.37,719.38 1224.06,715.46 1236.74,727.22 1249.43,776.42 1262.12,769.54 1274.82,705.22 1287.51,695.38 1300.19,712.5 1312.88,696.18 1325.58,701.14 1338.27,780.34 1350.95,770.9 1363.64,688.34 1376.34,679.06 1389.03,680.5 1401.72,684.02 1414.4,697.38 1427.1,778.34 1439.79,760.66 1452.47,671.22 1465.16,669.3 1477.86,667.3" fill="none" stroke="#DC3912" stroke-width="2" stroke-linejoin="round" stroke-linecap="butt"/>
<polyline points="1109.85,791.3 1122.54,791.54 1135.22,791.7 1147.91,791.7 1160.61,792.1 1173.3,792.26 1185.99,791.54 1198.67,790.18 1211.37,791.86 1224.06,791.54 1236.74,791.54 1249.43,792.1 1262.12,792.26 1274.82,791.54 1287.51,791.54 1300.19,791.54 1312.88,791.54 1325.58,791.7 1338.27,792.26 1350.95,792.34 1363.64,791.54 1376.34,791.54 1389.03,791.54 1401.72,791.54 1414.4,791.54 1427.1,792.34 1439.79,792.5 1452.47,792.5 1465.16,790.5 1477.86,791.7" fill="none" stroke="#F7931E" stroke-width="2" stroke-linejoin="round" stroke-linecap="butt"/>
<polyline points="1109.85,787.38 1122.54,787.22 1135.22,787.22 1147.91,788.58 1160.61,791.7 1173.3,791.7 1185.99,788.18 1198.67,788.18 1211.37,788.34 1224.06,788.18 1236.74,787.78 1249.43,791.7 1262.12,791.7 1274.82,788.74 1287.51,786.82 1300.19,788.18 1312.88,787.78 1325.58,787.78 1338.27,791.7 1350.95,791.7 1363.64,786.58 1376.34,787.62 1389.03,787.62 1401.72,787.62 1414.4,787.62 1427.1,791.94 1439.79,791.14 1452.47,786.18 1465.16,776.74 1477.86,780.34" fill="none" stroke="#008000" stroke-width="2" stroke-linejoin="round" stroke-linecap="butt"/>
<polyline points="1109.85,784.26 1122.54,783.3 1135.22,782.26 1147.91,786.18 1160.61,791.14 1173.3,790.74 1185.99,782.26 1198.67,782.26 1211.37,784.26 1224.06,787.22 1236.74,786.82 1249.43,791.14 1262.12,790.74 1274.82,786.58 1287.51,785.22 1300.19,784.66 1312.88,785.22 1325.58,786.18 1338.27,791.54 1350.95,791.14 1363.64,784.26 1376.34,782.26 1389.03,782.26 1401.72,783.3 1414.4,784.26 1427.1,791.7 1439.79,790.74 1452.47,785.22 1465.16,783.3 1477.86,784.26" fill="none" stroke="#666666" stroke-width="2" stroke-linejoin="round" stroke-linecap="butt"/>
<polyline points="1109.85,772.5 1122.54,774.42 1135.22,760.26 1147.91,775.38 1160.61,790.18 1173.3,786.58 1185.99,771.46 1198.67,759.06 1211.37,770.5 1224.06,762.26 1236.74,772.1 1249.43,790.18 1262.12,789.78 1274.82,774.82 1287.51,774.82 1300.19,781.3 1312.88,780.74 1325.58,769.54 1338.27,790.5 1350.95,790.5 1363.64,776.42 1376.34,763.62 1389.03,772.1 1401.72,769.54 1414.4,769.54 1427.1,791.14 1439.79,787.22 1452.47,746.9 1465.16,773.46 1477.86,758.34" fill="none" stroke="#4942CC" stroke-width="2" stroke-linejoin="round" stroke-linecap="butt"/>
<rect x="1061" y="575" width="12" height="12" fill="#4684EE"/>
<text x="1076.5" y="585.3" class="t lg">Documents</text>
<rect x="1061" y="596" width="12" height="12" fill="#DC3912"/>
<text x="1076.5" y="606.3" class="t lg">Spreadsheets</text>
<rect x="1205" y="575" width="12" height="12" fill="#F7931E"/>
<text x="1220.5" y="585.3" class="t lg">Drawings</text>
<rect x="1205" y="596" width="12" height="12" fill="#008000"/>
<text x="1220.5" y="606.3" class="t lg">Forms</text>
<rect x="1349" y="575" width="12" height="12" fill="#666666"/>
<text x="1364.5" y="585.3" class="t lg">Presentations</text>
<rect x="1349" y="596" width="12" height="12" fill="#4942CC"/>
<text x="1364.5" y="606.3" class="t lg">Uploaded Files</text>
</svg>
</div></body></html>
